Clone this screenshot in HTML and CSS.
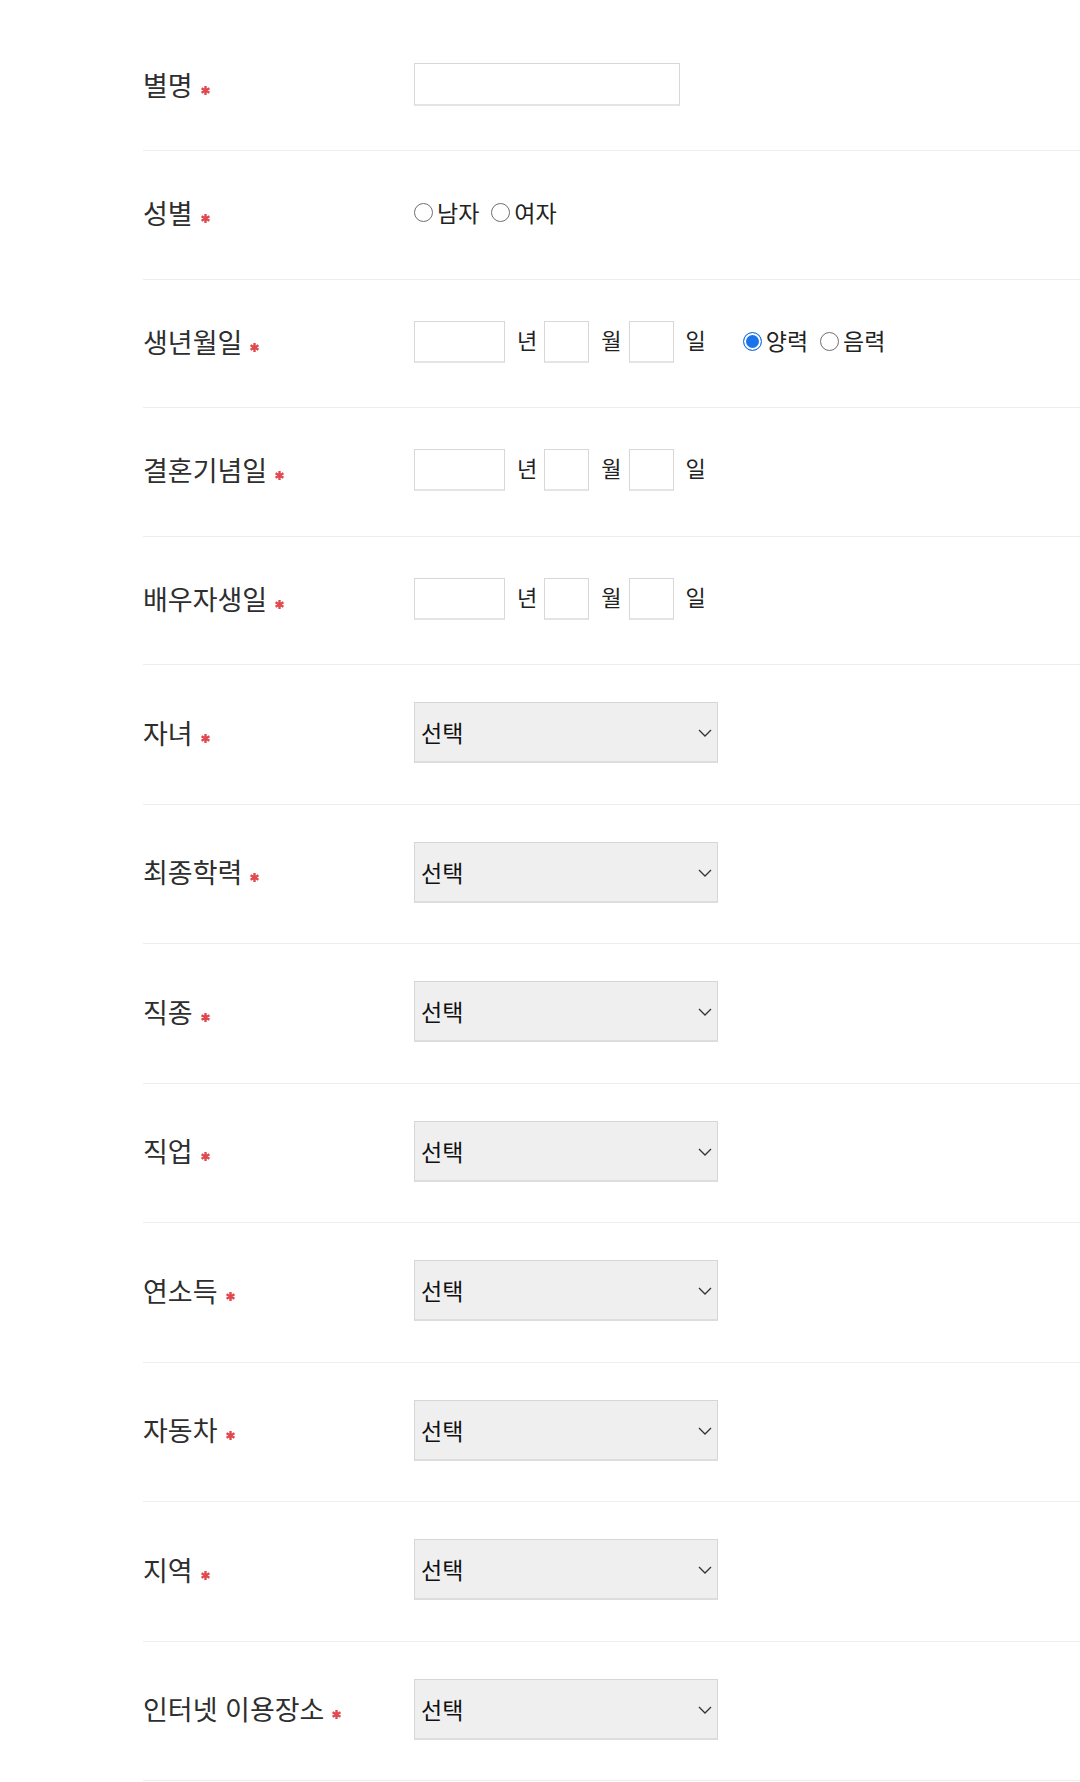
FILE: index.html
```html
<!DOCTYPE html>
<html lang="ko">
<head>
<meta charset="utf-8">
<title>회원정보</title>
<link rel="stylesheet" href="styles.css">
</head>
<body>
<div class="form">
  <div class="row">
    <div class="label">별명<svg class="req" viewBox="0 0 10 10"><path d="M5 0.8V9.2M1.4 2.9L8.6 7.1M1.4 7.1L8.6 2.9"/></svg></div>
    <div class="field"><input class="txt name" type="text"></div>
  </div>
  <div class="row">
    <div class="label">성별<svg class="req" viewBox="0 0 10 10"><path d="M5 0.8V9.2M1.4 2.9L8.6 7.1M1.4 7.1L8.6 2.9"/></svg></div>
    <div class="field radios">
      <label class="opt"><input class="radio" type="radio" name="sex">남자</label>
      <label class="opt"><input class="radio" type="radio" name="sex">여자</label>
    </div>
  </div>
  <div class="row">
    <div class="label">생년월일<svg class="req" viewBox="0 0 10 10"><path d="M5 0.8V9.2M1.4 2.9L8.6 7.1M1.4 7.1L8.6 2.9"/></svg></div>
    <div class="field">
      <input class="txt year" type="text"><span class="unit">년</span>
      <input class="txt md" type="text"><span class="unit">월</span>
      <input class="txt md" type="text"><span class="unit last">일</span>
      <label class="opt"><input class="radio" type="radio" name="cal" checked>양력</label>
      <label class="opt"><input class="radio" type="radio" name="cal">음력</label>
    </div>
  </div>
  <div class="row">
    <div class="label">결혼기념일<svg class="req" viewBox="0 0 10 10"><path d="M5 0.8V9.2M1.4 2.9L8.6 7.1M1.4 7.1L8.6 2.9"/></svg></div>
    <div class="field">
      <input class="txt year" type="text"><span class="unit">년</span>
      <input class="txt md" type="text"><span class="unit">월</span>
      <input class="txt md" type="text"><span class="unit">일</span>
    </div>
  </div>
  <div class="row">
    <div class="label">배우자생일<svg class="req" viewBox="0 0 10 10"><path d="M5 0.8V9.2M1.4 2.9L8.6 7.1M1.4 7.1L8.6 2.9"/></svg></div>
    <div class="field">
      <input class="txt year" type="text"><span class="unit">년</span>
      <input class="txt md" type="text"><span class="unit">월</span>
      <input class="txt md" type="text"><span class="unit">일</span>
    </div>
  </div>
  <div class="row sel">
    <div class="label">자녀<svg class="req" viewBox="0 0 10 10"><path d="M5 0.8V9.2M1.4 2.9L8.6 7.1M1.4 7.1L8.6 2.9"/></svg></div>
    <div class="field"><div class="select-wrap"><select><option>선택</option></select><svg class="chev" viewBox="0 0 14 8"><path d="M1 1L7 7L13 1"/></svg></div></div>
  </div>
  <div class="row sel">
    <div class="label">최종학력<svg class="req" viewBox="0 0 10 10"><path d="M5 0.8V9.2M1.4 2.9L8.6 7.1M1.4 7.1L8.6 2.9"/></svg></div>
    <div class="field"><div class="select-wrap"><select><option>선택</option></select><svg class="chev" viewBox="0 0 14 8"><path d="M1 1L7 7L13 1"/></svg></div></div>
  </div>
  <div class="row sel">
    <div class="label">직종<svg class="req" viewBox="0 0 10 10"><path d="M5 0.8V9.2M1.4 2.9L8.6 7.1M1.4 7.1L8.6 2.9"/></svg></div>
    <div class="field"><div class="select-wrap"><select><option>선택</option></select><svg class="chev" viewBox="0 0 14 8"><path d="M1 1L7 7L13 1"/></svg></div></div>
  </div>
  <div class="row sel">
    <div class="label">직업<svg class="req" viewBox="0 0 10 10"><path d="M5 0.8V9.2M1.4 2.9L8.6 7.1M1.4 7.1L8.6 2.9"/></svg></div>
    <div class="field"><div class="select-wrap"><select><option>선택</option></select><svg class="chev" viewBox="0 0 14 8"><path d="M1 1L7 7L13 1"/></svg></div></div>
  </div>
  <div class="row sel">
    <div class="label">연소득<svg class="req" viewBox="0 0 10 10"><path d="M5 0.8V9.2M1.4 2.9L8.6 7.1M1.4 7.1L8.6 2.9"/></svg></div>
    <div class="field"><div class="select-wrap"><select><option>선택</option></select><svg class="chev" viewBox="0 0 14 8"><path d="M1 1L7 7L13 1"/></svg></div></div>
  </div>
  <div class="row sel">
    <div class="label">자동차<svg class="req" viewBox="0 0 10 10"><path d="M5 0.8V9.2M1.4 2.9L8.6 7.1M1.4 7.1L8.6 2.9"/></svg></div>
    <div class="field"><div class="select-wrap"><select><option>선택</option></select><svg class="chev" viewBox="0 0 14 8"><path d="M1 1L7 7L13 1"/></svg></div></div>
  </div>
  <div class="row sel">
    <div class="label">지역<svg class="req" viewBox="0 0 10 10"><path d="M5 0.8V9.2M1.4 2.9L8.6 7.1M1.4 7.1L8.6 2.9"/></svg></div>
    <div class="field"><div class="select-wrap"><select><option>선택</option></select><svg class="chev" viewBox="0 0 14 8"><path d="M1 1L7 7L13 1"/></svg></div></div>
  </div>
  <div class="row sel">
    <div class="label">인터넷 이용장소<svg class="req" viewBox="0 0 10 10"><path d="M5 0.8V9.2M1.4 2.9L8.6 7.1M1.4 7.1L8.6 2.9"/></svg></div>
    <div class="field"><div class="select-wrap"><select><option>선택</option></select><svg class="chev" viewBox="0 0 14 8"><path d="M1 1L7 7L13 1"/></svg></div></div>
  </div>
</div>
</body>
</html>
```
FILE: styles.css
```css
html, body {
  margin: 0;
  padding: 0;
  background: #ffffff;
}
body {
  font-family: "Noto Sans CJK KR", "Noto Sans", sans-serif;
  color: #333333;
}
.form {
  margin-left: 143px;
  padding-top: 22.5px;
}
.row {
  display: flex;
  align-items: center;
  border-bottom: 1px solid #eeeeee;
  padding: 40.5px 0 44px;
}
.row.sel {
  padding: 37px 0 40.5px;
}
.label {
  width: 271px;
  flex: none;
  font-size: 27px;
  line-height: 42px;
  color: #2e2e2e;
  white-space: nowrap;
}
.req {
  width: 11px;
  height: 11px;
  margin-left: 7px;
  vertical-align: baseline;
}
.req path {
  stroke: #e2494e;
  stroke-width: 2.2;
  fill: none;
}
.field {
  display: flex;
  align-items: center;
  min-height: 43px;
  font-size: 23px;
  color: #222222;
}
.txt {
  box-sizing: border-box;
  margin: 0;
  padding: 0 6px;
  border: 1px solid #d8d8d8;
  border-bottom: 2px solid #e4e4e4;
  background: #ffffff;
  height: 42px;
  font-size: 20px;
}
.txt.name {
  width: 266px;
  height: 43px;
}
.txt.year {
  width: 91px;
}
.txt.md {
  width: 45px;
}
.unit {
  font-size: 22px;
  margin: 0 7px 6px 12px;
  line-height: 30px;
}
.unit.last {
  margin-right: 37px;
}
.opt {
  display: flex;
  align-items: center;
  margin-right: 12px;
  line-height: 30px;
  margin-bottom: 3px;
}
.radio {
  appearance: none;
  -webkit-appearance: none;
  box-sizing: border-box;
  width: 19px;
  height: 19px;
  margin: 2px 4px 0 0;
  border: 1.3px solid #6f6f6f;
  border-radius: 50%;
  background: #ffffff;
}
.radio:checked {
  border: 1.5px solid #1a73e8;
  box-shadow: inset 0 0 0 2px #ffffff;
  background: #1a73e8;
}
.select-wrap {
  position: relative;
  width: 304px;
  height: 61px;
}
.select-wrap select {
  appearance: none;
  -webkit-appearance: none;
  box-sizing: border-box;
  width: 100%;
  height: 100%;
  margin: 0;
  padding: 0 0 0 6px;
  border: 1px solid #d6d6d6;
  border-bottom: 2px solid #dddddd;
  border-radius: 0;
  background: #efefef;
  font-family: "Noto Sans CJK KR", sans-serif;
  font-size: 23px;
  color: #111111;
}
.chev {
  position: absolute;
  right: 6px;
  top: 27px;
  width: 14px;
  height: 8px;
  pointer-events: none;
}
.chev path {
  fill: none;
  stroke: #333333;
  stroke-width: 1.3;
}
```
